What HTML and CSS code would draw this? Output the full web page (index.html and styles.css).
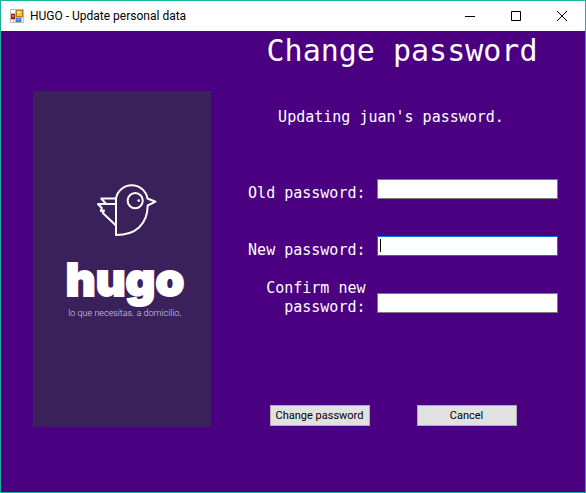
FILE: index.html
```html
<!DOCTYPE html>
<html lang="en">
<head>
<meta charset="utf-8">
<title>HUGO - Update personal data</title>
<link rel="stylesheet" href="styles.css">
</head>
<body>
<div class="window">
  <header class="titlebar">
    <svg class="app-icon" viewBox="0 0 14 14" aria-hidden="true">
      <path fill="#bdbdbd" d="M0 0h14v14H0z"/>
      <path fill="#fff" d="M1 1h4v3H1zM1 11h2v2H1zM4 11h1v2H4zM12 9h1v4h-1z"/>
      <path fill="#a82018" d="M1 5h4v5H1z"/>
      <path fill="#e0786a" d="M2 6h2v2H2z"/>
      <path fill="#b87800" d="M6 1h7v7H6z"/>
      <path fill="#ffc83c" d="M7 2h5v5H7z"/>
      <path fill="#ffeaa0" d="M7 2h3v2H7z"/>
      <path fill="#3c78d8" d="M6 9h5v4H6z"/>
      <path fill="#86b4f4" d="M7 10h3v1H7z"/>
    </svg>
    <span class="caption">HUGO - Update personal data</span>
    <button class="window-button" type="button" aria-label="Minimize">
      <svg viewBox="0 0 11 11"><path d="M0 5.500h10"/></svg>
    </button>
    <button class="window-button" type="button" aria-label="Maximize">
      <svg viewBox="0 0 11 11"><path d="M.5 .5h9v9h-9z"/></svg>
    </button>
    <button class="window-button" type="button" aria-label="Close">
      <svg viewBox="0 0 11 11"><path d="M0 0l10 10M10 0l-10 10"/></svg>
    </button>
  </header>
  <main class="content">
    <aside class="brand">
      <svg class="bird" viewBox="93 182 66 56" aria-hidden="true">
        <path d="M117 236V199.500A16 16 0 0 1 148.500 199.500L156.500 202.700L148.700 206.500C148.500 225 137 236 117 236Z"/>
        <path d="M117 199.500H102.200L107.200 205H117M107.200 205H99L102.800 209L101.800 212L105 211.500L103.800 214L117 226.500"/>
        <circle cx="136.200" cy="201.600" r="7.600"/>
        <circle class="pupil" cx="139.700" cy="201.600" r="1.300"/>
      </svg>
      <div class="wordmark">hugo</div>
      <div class="tagline">lo que necesitas. a domicilio<b>.</b></div>
    </aside>
    <section class="panel">
      <h1>Change password</h1>
      <form class="form">
        <p class="message">Updating juan's password.</p>
        <div class="row">
          <label for="old">Old password:</label>
          <div class="field"><input id="old" type="password"></div>
        </div>
        <div class="row">
          <label for="new">New password:</label>
          <div class="field active"><input id="new" type="password"></div>
        </div>
        <div class="row">
          <label for="confirm">Confirm new password:</label>
          <div class="field"><input id="confirm" type="password"></div>
        </div>
        <div class="actions">
          <button class="action" type="button">Change password</button>
          <button class="action" type="button">Cancel</button>
        </div>
      </form>
    </section>
  </main>
</div>
</body>
</html>
```
FILE: styles.css
```css
* {
  box-sizing: border-box;
}

body {
  margin: 0;
}

.window {
  display: flex;
  flex-direction: column;
  min-height: 100vh;
  border: 1px solid #18b09c;
  background: #4b0082;
}

.titlebar {
  display: flex;
  align-items: center;
  height: 30px;
  padding-left: 9px;
  background: #fff;
}

.app-icon {
  width: 14px;
  height: 14px;
}

.caption {
  flex: 1;
  margin-left: 6px;
  font: 12px/16px Roboto, "Open Sans", sans-serif;
  color: #000;
}

.window-button {
  display: flex;
  align-items: center;
  justify-content: center;
  width: 46px;
  height: 28px;
  padding: 0;
  border: 0;
  background: none;
}

.window-button svg {
  width: 11px;
  height: 11px;
  fill: none;
  stroke: #000;
}

.content {
  flex: 1;
  display: grid;
  grid-template-columns: 218px 1fr;
}

.brand {
  display: flex;
  flex-direction: column;
  align-items: center;
  margin: 60px 8px 65px 32px;
  padding: 90px 0 0 6px;
  background: #3b215b;
  color: #fff;
}

.bird {
  width: 66px;
  height: 56px;
  fill: none;
  stroke: #fff;
  stroke-width: 2;
  stroke-linejoin: round;
}

.bird .pupil {
  fill: #fff;
  stroke: none;
}

.wordmark {
  margin-top: 14px;
  font: 900 46px/56px Inter, sans-serif;
  -webkit-text-stroke: 2px #fff;
}

.tagline {
  font: 300 9px/12px Roboto, sans-serif;
  color: #d8d0e0;
}

.tagline b {
  color: #fff;
}

.panel {
  color: #fff;
  font: 15px/19px "DejaVu Sans Mono", monospace;
}

h1 {
  margin: 0;
  padding-top: 2px;
  font-size: 30px;
  line-height: 36px;
  font-weight: normal;
  text-align: center;
}

.form {
  padding: 0 27px 0 9px;
}

.message {
  margin: 39px 4px 19px 0;
  text-align: center;
}

.row {
  display: flex;
  align-items: flex-end;
  gap: 11px;
  height: 57px;
}

.row label {
  flex: 1;
  padding-left: 10px;
  text-align: right;
}

.field {
  position: relative;
  width: 55%;
  height: 20px;
  margin-bottom: 4px;
}

.field input {
  display: block;
  width: 100%;
  height: 20px;
  padding: 0 3px;
  border: 1px solid #7a7a7a;
  background: #fff;
  font: 11px "Liberation Sans", sans-serif;
}

.field.active input {
  border-color: #0078d7;
}

.field.active::after {
  content: "";
  position: absolute;
  left: 3px;
  top: 3px;
  width: 1px;
  height: 13px;
  background: #000;
}

.actions {
  display: flex;
  justify-content: center;
  gap: 47px;
  margin-top: 88px;
}

.action {
  width: 100px;
  height: 21px;
  padding: 0;
  border: 1px solid #adadad;
  background: #e1e1e1;
  color: #000;
  font: 11px/13px Roboto, "Liberation Sans", sans-serif;
}
```
